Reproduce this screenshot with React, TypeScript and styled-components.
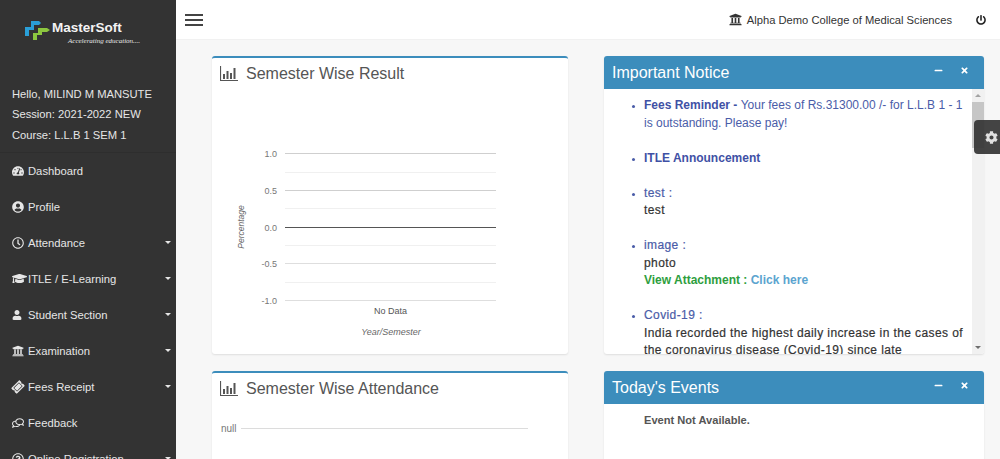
import React from "react";
import styled, { createGlobalStyle } from "styled-components";
import {
	FaTachometerAlt,
	FaUserCircle,
	FaRegClock,
	FaGraduationCap,
	FaUser,
	FaUniversity,
	FaTicketAlt,
	FaRegComments,
	FaCog,
	FaPowerOff,
	FaTimes,
	FaMinus,
	FaRegQuestionCircle,
} from "react-icons/fa";

const GlobalStyle = createGlobalStyle`
	html, body {
		margin: 0;
		padding: 0;
		height: 100%;
		overflow: hidden;
		background: #f7f7f7;
		font-family: "Liberation Sans", Arial, sans-serif;
	}
`;

const navItems = [
	{ label: "Dashboard", icon: <FaTachometerAlt />, caret: false },
	{ label: "Profile", icon: <FaUserCircle />, caret: false },
	{ label: "Attendance", icon: <FaRegClock />, caret: true },
	{ label: "ITLE / E-Learning", icon: <FaGraduationCap size={15} />, caret: true },
	{ label: "Student Section", icon: <FaUser size={10} />, caret: true },
	{ label: "Examination", icon: <FaUniversity />, caret: true },
	{ label: "Fees Receipt", icon: <FaTicketAlt style={{ transform: "rotate(-45deg)" }} />, caret: true },
	{ label: "Feedback", icon: <FaRegComments style={{ transform: "scaleX(-1)" }} />, caret: false },
	{ label: "Online Registration", icon: <FaRegQuestionCircle />, caret: true },
];

const BarsIcon = () => (
	<svg width="18" height="15" viewBox="0 0 18 15">
		<path d="M0.5 0v14.5H18" fill="none" stroke="#555" strokeWidth="1.2" />
		<path d="M3 8h2v5H3zM6.5 5h2v8h-2zM10 7h2v6h-2zM13.5 2h2v11h-2z" fill="#555" />
	</svg>
);

const Logo = () => (
	<svg width="26" height="21" viewBox="0 0 26 21">
		<path d="M6 1h8l2 2-2 2H9v5H4v6H0V7h6z" fill="#2a9fd8" />
		<path d="M13 8h9l3 2-3 2h-5v3h-5v5H8V13h5z" fill="#8cc63f" />
	</svg>
);

const ResultChart = () => {
	const minor = [172.5, 208.5, 245.5, 282.5];
	const major = [
		{ y: 153.5, label: "1.0", color: "#cfcfcf" },
		{ y: 190.5, label: "0.5", color: "#cfcfcf" },
		{ y: 227.5, label: "0.0", color: "#555" },
		{ y: 263.5, label: "-0.5", color: "#dedede" },
		{ y: 300.5, label: "-1.0", color: "#dedede" },
	];
	return (
		<ChartSvg viewBox="0 0 356 258" width="356" height="258">
			<g transform="translate(-212 -96)">
				{minor.map((y) => (
					<line key={y} x1="285" x2="496" y1={y} y2={y} stroke="#f0f0f0" />
				))}
				{major.map((m) => (
					<g key={m.label}>
						<line x1="285" x2="496" y1={m.y} y2={m.y} stroke={m.color} />
						<text x="277" y={m.y + 3.5} textAnchor="end" fontSize="9" fill="#777">
							{m.label}
						</text>
					</g>
				))}
				<text x="390.5" y="314" textAnchor="middle" fontSize="9" fill="#555">
					No Data
				</text>
				<text x="391" y="335" textAnchor="middle" fontSize="9" fontStyle="italic" fill="#666">
					Year/Semester
				</text>
				<text
					x="244"
					y="227"
					textAnchor="middle"
					fontSize="8.5"
					fontStyle="italic"
					fill="#666"
					transform="rotate(-90 244 227)"
				>
					Percentage
				</text>
			</g>
		</ChartSvg>
	);
};

const App = () => {
	return (
		<>
			<GlobalStyle />
			<Shell>
				<Sidebar>
					<LogoRow>
						<Logo />
						<LogoText>
							<LogoName>MasterSoft</LogoName>
							<LogoTag>Accelerating education....</LogoTag>
						</LogoText>
					</LogoRow>
					<UserInfo>
						<div>Hello, MILIND M MANSUTE</div>
						<div>Session: 2021-2022 NEW</div>
						<div>Course: L.L.B 1 SEM 1</div>
					</UserInfo>
					<Nav>
						{navItems.map((item) => (
							<NavItem key={item.label}>
								<NavIcon>{item.icon}</NavIcon>
								<NavLabel>{item.label}</NavLabel>
								{item.caret && <Caret />}
							</NavItem>
						))}
					</Nav>
				</Sidebar>
				<Main>
					<TopBar>
						<Burger>
							<span />
							<span />
							<span />
						</Burger>
						<College>
							<FaUniversity size={13} color="#333" />
							Alpha Demo College of Medical Sciences
						</College>
						<PowerButton>
							<FaPowerOff size={10} />
						</PowerButton>
					</TopBar>
					<Content>
						<Column>
							<ChartCard $height={298}>
								<CardTitle>
									<BarsIcon />
									Semester Wise Result
								</CardTitle>
								<ResultChart />
							</ChartCard>
							<ChartCard $height={120}>
								<CardTitle>
									<BarsIcon />
									Semester Wise Attendance
								</CardTitle>
								<NullRow>
									<NullLabel>null</NullLabel>
									<NullLine />
								</NullRow>
							</ChartCard>
						</Column>
						<Column>
							<Panel $height={298}>
								<PanelHeader>
									<PanelTitle>Important Notice</PanelTitle>
									<PanelTools>
										<FaMinus />
										<FaTimes />
									</PanelTools>
								</PanelHeader>
								<NoticeBody>
									<NoticeScroll>
										<NoticeList>
											<Notice>
												<strong>Fees Reminder - </strong>Your fees of Rs.31300.00 /- for L.L.B 1 - 1 is
												outstanding. Please pay!
											</Notice>
											<Notice>
												<strong>ITLE Announcement</strong>
											</Notice>
											<Notice>
												<NoticeHead>test :</NoticeHead>
												<NoticeText>test</NoticeText>
											</Notice>
											<Notice>
												<NoticeHead>image :</NoticeHead>
												<NoticeText>photo</NoticeText>
												<Attachment>
													View Attachment : <ClickHere>Click here</ClickHere>
												</Attachment>
											</Notice>
											<Notice>
												<NoticeHead>Covid-19 :</NoticeHead>
												<NoticeText>
													India recorded the highest daily increase in the cases of the coronavirus
													disease (Covid-19) since late
												</NoticeText>
											</Notice>
										</NoticeList>
									</NoticeScroll>
									<ScrollTrack>
										<ArrowUp />
										<ScrollThumb />
										<ArrowDown />
									</ScrollTrack>
								</NoticeBody>
							</Panel>
							<Panel $height={120}>
								<PanelHeader>
									<PanelTitle>Today's Events</PanelTitle>
									<PanelTools>
										<FaMinus />
										<FaTimes />
									</PanelTools>
								</PanelHeader>
								<EventBody>Event Not Available.</EventBody>
							</Panel>
						</Column>
					</Content>
				</Main>
				<SettingsTab>
					<FaCog size={13} />
				</SettingsTab>
			</Shell>
		</>
	);
};

const Shell = styled.div`
	display: flex;
	width: 1000px;
	height: 459px;
	overflow: hidden;
	position: relative;
`;

const Sidebar = styled.aside`
	width: 176px;
	flex: none;
	background: #333333;
	color: #e6e6e6;
	overflow: hidden;
`;

const LogoRow = styled.div`
	display: flex;
	align-items: flex-start;
	gap: 1px;
	height: 84px;
	padding: 20px 0 0 25px;
	box-sizing: border-box;
`;

const LogoText = styled.div`
	display: flex;
	flex-direction: column;
`;

const LogoName = styled.span`
	font-size: 13.5px;
	font-weight: 700;
	line-height: 16px;
	color: #f4f4f4;
`;

const LogoTag = styled.span`
	font-family: "Liberation Serif", serif;
	font-style: italic;
	font-size: 7px;
	line-height: 9px;
	margin: 1px 0 0 16px;
	white-space: nowrap;
	color: #e8e8e8;
`;

const UserInfo = styled.div`
	padding: 0 0 7px 12px;
	font-size: 11.2px;
	line-height: 20.3px;
	border-bottom: 1px solid #2e2e2e;
`;

const Nav = styled.nav`
	display: flex;
	flex-direction: column;
`;

const NavItem = styled.div`
	display: flex;
	align-items: center;
	height: 36px;
	flex: none;
	padding: 0 5px 0 12px;
	font-size: 11.25px;
`;

const NavIcon = styled.span`
	width: 16px;
	display: flex;
	align-items: center;
	font-size: 12px;
`;

const NavLabel = styled.span`
	flex: 1;
	white-space: nowrap;
`;

const Caret = styled.span`
	width: 0;
	height: 0;
	border-left: 3.5px solid transparent;
	border-right: 3.5px solid transparent;
	border-top: 3.5px solid #e6e6e6;
`;

const Main = styled.main`
	flex: 1;
	display: flex;
	flex-direction: column;
	min-width: 0;
`;

const TopBar = styled.header`
	display: flex;
	align-items: center;
	height: 39px;
	flex: none;
	padding: 0 14px 0 9px;
	background: #ffffff;
	border-bottom: 1px solid #f1f1f1;
`;

const Burger = styled.div`
	display: flex;
	flex-direction: column;
	gap: 3px;
	margin-right: auto;
	span {
		display: block;
		width: 18px;
		height: 2px;
		background: #444;
	}
`;

const College = styled.div`
	display: flex;
	align-items: center;
	gap: 5px;
	font-size: 11.2px;
	color: #333;
`;

const PowerButton = styled.div`
	display: flex;
	margin-left: 24px;
	color: #222;
`;

const Content = styled.div`
	flex: 1;
	display: grid;
	grid-template-columns: 356px 380px;
	column-gap: 36px;
	padding: 16px 0 0 36px;
	min-height: 0;
	overflow: hidden;
`;

const Column = styled.div`
	display: flex;
	flex-direction: column;
	gap: 17px;
`;

const ChartCard = styled.section<{ $height: number }>`
	height: ${({ $height }) => $height}px;
	flex: none;
	box-sizing: border-box;
	background: #ffffff;
	border-top: 2px solid #3c8dbc;
	border-radius: 3px;
	box-shadow: 0 1px 2px rgba(0, 0, 0, 0.1);
	overflow: hidden;
`;

const CardTitle = styled.h3`
	display: flex;
	align-items: center;
	gap: 8px;
	height: 38px;
	box-sizing: border-box;
	margin: 0;
	padding: 0 0 7px 8px;
	font-size: 16px;
	font-weight: 400;
	color: #555;
`;

const ChartSvg = styled.svg`
	display: block;
	font-family: "Liberation Sans", Arial, sans-serif;
`;

const NullRow = styled.div`
	display: flex;
	align-items: center;
	gap: 4px;
	padding: 12px 0 0 9px;
`;

const NullLabel = styled.span`
	font-size: 10px;
	color: #777;
`;

const NullLine = styled.div`
	width: 287px;
	height: 1px;
	background: #dcdcdc;
`;

const Panel = styled.section<{ $height: number }>`
	height: ${({ $height }) => $height}px;
	flex: none;
	display: flex;
	flex-direction: column;
	background: #ffffff;
	border-radius: 3px;
	box-shadow: 0 1px 2px rgba(0, 0, 0, 0.1);
	overflow: hidden;
`;

const PanelHeader = styled.div`
	display: flex;
	align-items: center;
	height: 33px;
	flex: none;
	padding: 0 15px 0 8px;
	background: #3c8dbc;
	color: #ffffff;
`;

const PanelTitle = styled.h3`
	flex: 1;
	margin: 0;
	font-size: 16px;
	font-weight: 400;
`;

const PanelTools = styled.div`
	display: flex;
	align-items: center;
	gap: 17px;
	margin-top: -4px;
	font-size: 9px;
`;

const NoticeBody = styled.div`
	flex: 1;
	display: flex;
	min-height: 0;
`;

const NoticeScroll = styled.div`
	flex: 1;
	overflow: hidden;
	padding-top: 8px;
`;

const NoticeList = styled.ul`
	margin: 0;
	padding: 0 0 0 40px;
	font-size: 12px;
	line-height: 17.5px;
	color: #4a5ca8;
`;

const Notice = styled.li`
	margin-bottom: 17.5px;
	&::marker {
		font-size: 9px;
	}
	strong {
		font-weight: 700;
		color: #3f51a5;
	}
`;

const NoticeHead = styled.div`
	letter-spacing: 0.4px;
	-webkit-text-stroke: 0.2px currentColor;
`;

const NoticeText = styled.div`
	color: #333;
	letter-spacing: 0.4px;
	-webkit-text-stroke: 0.2px currentColor;
`;

const Attachment = styled.div`
	font-weight: 700;
	color: #2e9e3e;
`;

const ClickHere = styled.span`
	color: #5ba4cf;
	font-weight: 700;
`;

const ScrollTrack = styled.div`
	width: 12px;
	flex: none;
	display: flex;
	flex-direction: column;
	align-items: center;
	background: #f1f1f1;
`;

const ArrowUp = styled.span`
	margin-top: 5px;
	border-left: 3.5px solid transparent;
	border-right: 3.5px solid transparent;
	border-bottom: 3.5px solid #a3a3a3;
`;

const ScrollThumb = styled.div`
	width: 12px;
	height: 46px;
	margin-top: 5px;
	background: #c6c6c6;
`;

const ArrowDown = styled.span`
	margin-top: auto;
	margin-bottom: 5px;
	border-left: 3.5px solid transparent;
	border-right: 3.5px solid transparent;
	border-top: 3.5px solid #6e6e6e;
`;

const EventBody = styled.div`
	padding: 10px 0 0 40px;
	font-size: 11.1px;
	font-weight: 700;
	color: #555;
`;

const SettingsTab = styled.div`
	position: absolute;
	top: 120px;
	right: 0;
	width: 26px;
	height: 34px;
	box-sizing: border-box;
	display: flex;
	align-items: center;
	justify-content: flex-end;
	padding-right: 2px;
	background: rgba(52, 52, 52, 0.92);
	border-radius: 4px 0 0 4px;
	color: #e0e0e0;
`;

export default App;
